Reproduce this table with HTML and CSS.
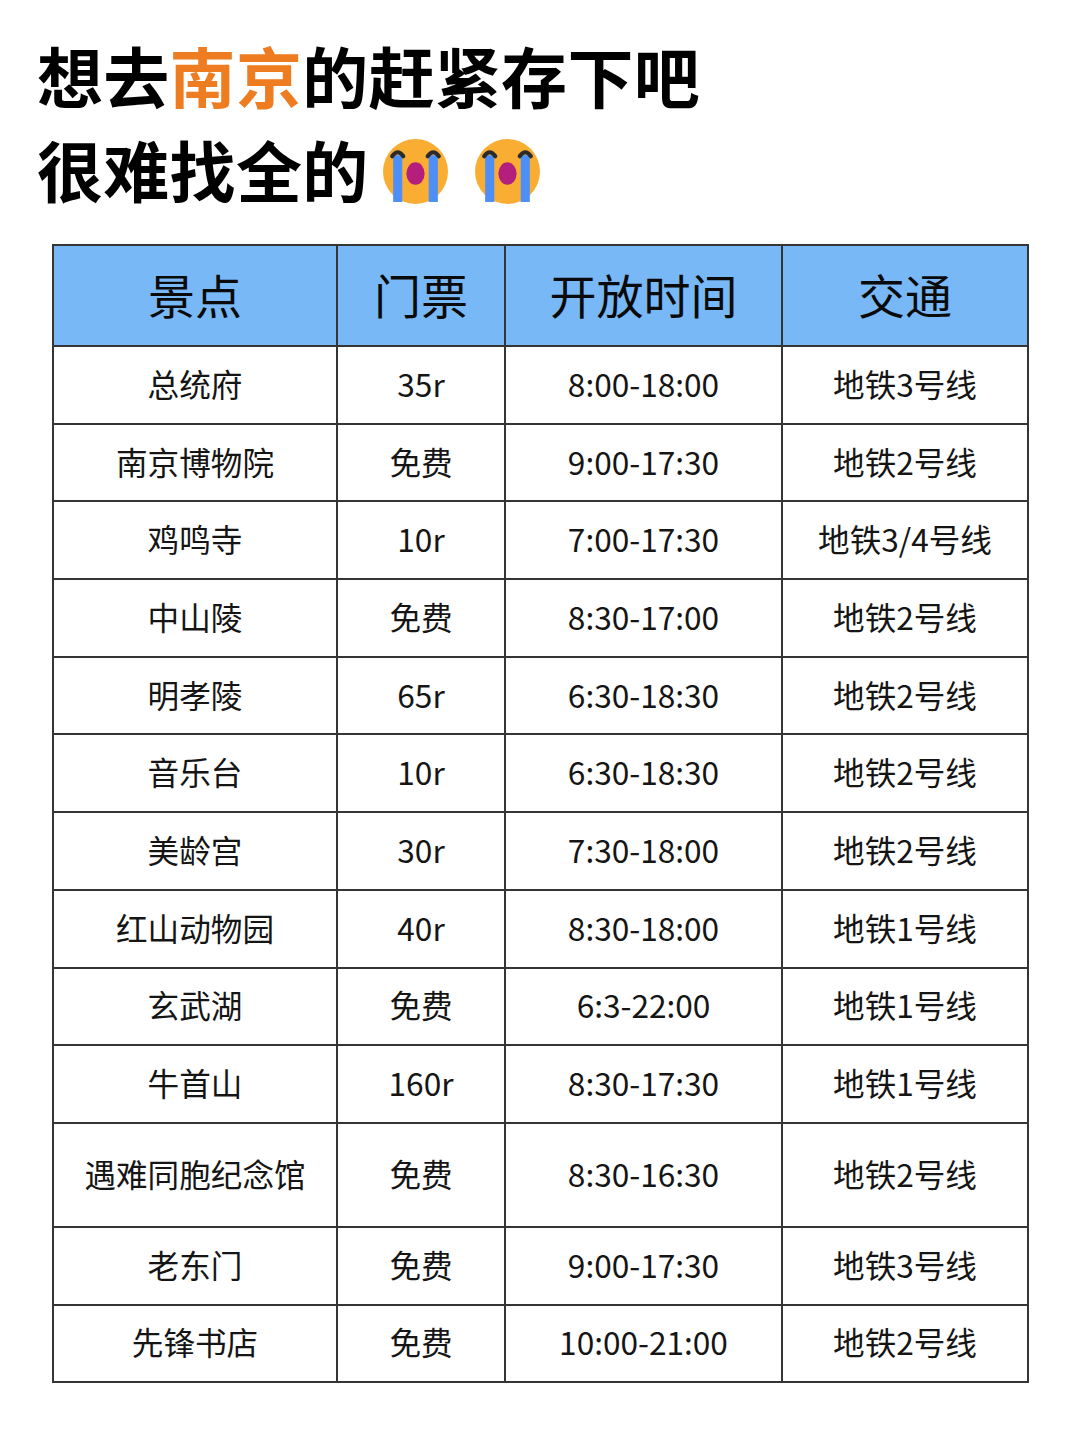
FILE: index.html
```html
<!DOCTYPE html>
<html lang="zh-CN">
<head>
<meta charset="utf-8">
<link rel="stylesheet" href="styles.css">
</head>
<body>
<div class="page">
  <h1 class="title">
    <span class="line">想去<span class="accent">南京</span>的赶紧存下吧</span>
    <span class="line">很难找全的<svg class="emoji first" viewBox="0 0 64 64"><circle cx="32" cy="32" r="32" fill="#f9ad32"/><rect x="10" y="16" width="9" height="46" fill="#4d8ff6"/><rect x="45" y="16" width="9" height="46" fill="#4d8ff6"/><ellipse cx="32" cy="34" rx="9" ry="11" fill="#b41f7e"/><path d="M9 17 Q14.5 9 20 17" stroke="#2b2b2b" stroke-width="4" fill="none" stroke-linecap="round"/><path d="M44 17 Q49.5 9 55 17" stroke="#2b2b2b" stroke-width="4" fill="none" stroke-linecap="round"/></svg><svg class="emoji second" viewBox="0 0 64 64"><circle cx="32" cy="32" r="32" fill="#f9ad32"/><rect x="10" y="16" width="9" height="46" fill="#4d8ff6"/><rect x="45" y="16" width="9" height="46" fill="#4d8ff6"/><ellipse cx="32" cy="34" rx="9" ry="11" fill="#b41f7e"/><path d="M9 17 Q14.5 9 20 17" stroke="#2b2b2b" stroke-width="4" fill="none" stroke-linecap="round"/><path d="M44 17 Q49.5 9 55 17" stroke="#2b2b2b" stroke-width="4" fill="none" stroke-linecap="round"/></svg></span>
  </h1>
  <table class="grid">
    <colgroup>
      <col class="c1"><col class="c2"><col class="c3"><col class="c4">
    </colgroup>
    <thead>
      <tr><th>景点</th><th>门票</th><th>开放时间</th><th>交通</th></tr>
    </thead>
    <tbody>
      <tr><td>总统府</td><td>35r</td><td>8:00-18:00</td><td>地铁3号线</td></tr>
      <tr><td>南京博物院</td><td>免费</td><td>9:00-17:30</td><td>地铁2号线</td></tr>
      <tr><td>鸡鸣寺</td><td>10r</td><td>7:00-17:30</td><td>地铁3/4号线</td></tr>
      <tr><td>中山陵</td><td>免费</td><td>8:30-17:00</td><td>地铁2号线</td></tr>
      <tr><td>明孝陵</td><td>65r</td><td>6:30-18:30</td><td>地铁2号线</td></tr>
      <tr><td>音乐台</td><td>10r</td><td>6:30-18:30</td><td>地铁2号线</td></tr>
      <tr><td>美龄宫</td><td>30r</td><td>7:30-18:00</td><td>地铁2号线</td></tr>
      <tr><td>红山动物园</td><td>40r</td><td>8:30-18:00</td><td>地铁1号线</td></tr>
      <tr><td>玄武湖</td><td>免费</td><td>6:3-22:00</td><td>地铁1号线</td></tr>
      <tr><td>牛首山</td><td>160r</td><td>8:30-17:30</td><td>地铁1号线</td></tr>
      <tr class="tall"><td>遇难同胞纪念馆</td><td>免费</td><td>8:30-16:30</td><td>地铁2号线</td></tr>
      <tr><td>老东门</td><td>免费</td><td>9:00-17:30</td><td>地铁3号线</td></tr>
      <tr><td>先锋书店</td><td>免费</td><td>10:00-21:00</td><td>地铁2号线</td></tr>
    </tbody>
  </table>
</div>
</body>
</html>
```
FILE: styles.css
```css
html, body {
  margin: 0;
  padding: 0;
  background: #ffffff;
}
body {
  font-family: "Noto Sans CJK SC", "Noto Sans", sans-serif;
  color: #111111;
}
.page {
  width: 1080px;
  padding-top: 27px;
}
.title {
  margin: 0 0 29px 37px;
  font-size: 66px;
  font-weight: 700;
  line-height: 94px;
  color: #000000;
  letter-spacing: 0.3px;
}
.line {
  display: block;
  white-space: nowrap;
}
.accent {
  color: #ee7d22;
}
.emoji {
  width: 65px;
  height: 65px;
  vertical-align: -7px;
}
.emoji.first {
  margin-left: 14px;
}
.emoji.second {
  margin-left: 27px;
}
.grid {
  margin-left: 52px;
  border-collapse: collapse;
  table-layout: fixed;
  width: 975px;
}
.c1 { width: 284px; }
.c2 { width: 168px; }
.c3 { width: 277px; }
.c4 { width: 246px; }
.grid th,
.grid td {
  border: 2px solid #353535;
  text-align: center;
  vertical-align: middle;
  padding: 0 0 4px 0;
}
.grid th {
  background: #78b8f6;
  height: 95px;
  font-size: 47px;
  font-weight: 400;
  color: #0a0a0a;
}
.grid td {
  height: 71.7px;
  font-size: 31.6px;
  color: #151515;
}
.grid tr.tall td {
  height: 98px;
}
```
